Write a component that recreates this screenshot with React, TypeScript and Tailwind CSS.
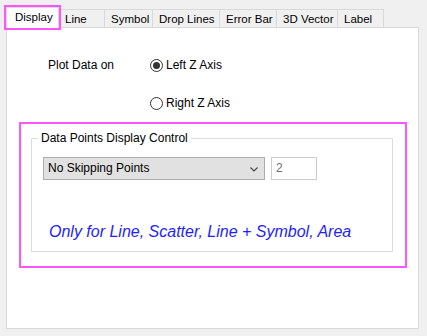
const tabs = [
  { label: "Line", w: "w-[46px]" },
  { label: "Symbol", w: "w-[48px]" },
  { label: "Drop Lines", w: "w-[67px]" },
  { label: "Error Bar", w: "w-[57px]" },
  { label: "3D Vector", w: "w-[61px]" },
  { label: "Label", w: "w-[46px]" },
];

function Radio({ checked, label }: { checked?: boolean; label: string }) {
  return (
    <div className="flex items-center h-4">
      <span className="w-[13px] h-[13px] rounded-full border border-[#333333] bg-white flex items-center justify-center">
        {checked && <span className="w-[7px] h-[7px] rounded-full bg-[#333333]" />}
      </span>
      <span className="ml-[3px] text-black">{label}</span>
    </div>
  );
}

export default function App() {
  return (
    <div
      className="w-[427px] h-[336px] bg-[#f0f0f0] pt-[7px] pl-[6px] text-[12px] leading-[15px] text-black"
      style={{ fontFamily: '"Liberation Sans", Arial, sans-serif' }}
    >
      {/* Tabs */}
      <div className="flex items-end h-[20px] text-[11.5px]">
        <div className="relative z-10 w-[53px] h-[21px] -mb-px bg-white border-l border-t border-r border-[#d9d9d9] outline-2 outline-[#ff55ff] pl-[8px] pt-[2px]">
          Display
        </div>
        {tabs.map((t) => (
          <div
            key={t.label}
            className={`${t.w} h-[18px] border-t border-r border-[#d9d9d9] bg-[#f0f0f0] pl-[6px] pt-[2px] whitespace-nowrap`}
          >
            {t.label}
          </div>
        ))}
      </div>

      {/* Panel */}
      <div className="w-[413px] h-[302px] bg-white border border-[#d9d9d9]">
        <div className="flex pl-[41px] pt-[29px]">
          <div className="w-[102px] h-4 flex items-center">Plot Data on</div>
          <div className="flex flex-col gap-[22px]">
            <Radio checked label="Left Z Axis" />
            <Radio label="Right Z Axis" />
          </div>
        </div>

        <div className="mt-[11px] ml-[12px] w-[388px] h-[146px] border-2 border-[#ff55ff] pt-[14px] pl-[10px]">
          <div className="relative w-[362px] h-[114px] border border-[#dcdcdc]">
            <span className="absolute -top-[8px] left-[6px] bg-white px-[3px]">
              Data Points Display Control
            </span>
            <div className="flex pl-[11px] pt-[18px] gap-[6px]">
              <div className="w-[222px] h-[23px] bg-[#e1e1e1] border border-[#adadad] flex items-center justify-between pl-[4px] pr-[6px]">
                <span>No Skipping Points</span>
                <svg width="8" height="5" viewBox="0 0 8 5" className="mt-px">
                  <polyline points="0.5,0.5 4,4 7.5,0.5" fill="none" stroke="#444444" strokeWidth="1.1" />
                </svg>
              </div>
              <div className="w-[46px] h-[23px] bg-white border border-[#cccccc] flex items-center pl-[4px] text-[#6d6d6d]">
                2
              </div>
            </div>
            <div className="mt-[43px] pl-[17px] text-[16px] leading-[18px] italic text-[#1e1eff] whitespace-nowrap">
              Only for Line, Scatter, Line + Symbol, Area
            </div>
          </div>
        </div>
      </div>
    </div>
  );
}
